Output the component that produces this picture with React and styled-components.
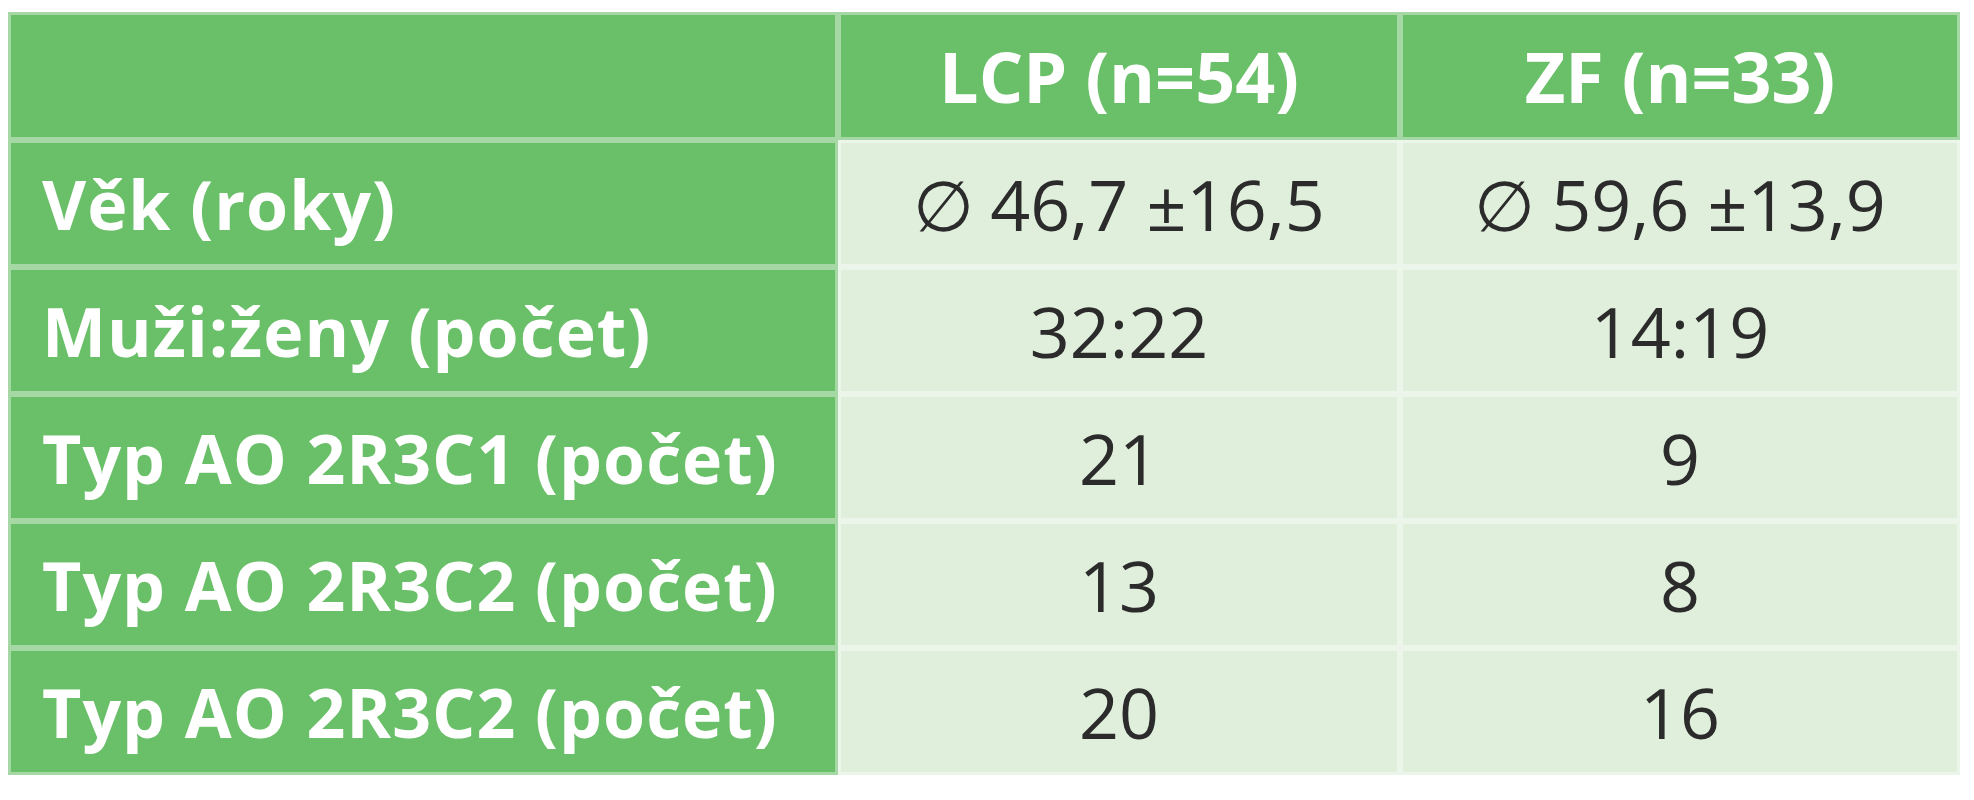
import React from "react";
import styled, { createGlobalStyle } from "styled-components";

// zakladni styly stranky
const GlobalStyle = createGlobalStyle`
  html, body {
    margin: 0;
    padding: 0;
    background: #ffffff;
  }
  body {
    padding: 12px 14px 0 8px;
    font-family: "Open Sans", "Noto Sans", sans-serif;
  }
`;

const Table = styled.div`
  display: grid;
  grid-template-columns: 830px 562px 560px;
  grid-template-rows: 128px repeat(5, 127px);
  width: 1952px;
`;

const Cell = styled.div`
  display: flex;
  align-items: center;
  justify-content: ${(p) => (p.$kind === "label" ? "flex-start" : "center")};
  padding: 0 0 0 ${(p) => (p.$kind === "label" ? "31px" : "0")};
  border: 3px solid rgba(255, 255, 255, 0.4);
  background-color: ${(p) => (p.$kind === "value" ? "#e0efdc" : "#6abf69")};
  color: ${(p) => (p.$kind === "value" ? "#2b2b2b" : "#ffffff")};
  font-size: ${(p) => (p.$kind === "label" ? "68px" : "70px")};
  font-weight: ${(p) => (p.$kind === "value" ? 400 : 700)};
  letter-spacing: ${(p) => (p.$kind === "label" ? "1px" : "0")};
  white-space: nowrap;
  box-sizing: border-box;
`;

const Sign = styled.span`
  font-weight: 300;
  margin-right: 16px;
`;

const rows = [
  { label: "Věk (roky)", lcp: ["46,7", "16,5"], zf: ["59,6", "13,9"] },
  { label: "Muži:ženy (počet)", lcp: "32:22", zf: "14:19" },
  { label: "Typ AO 2R3C1 (počet)", lcp: "21", zf: "9" },
  { label: "Typ AO 2R3C2 (počet)", lcp: "13", zf: "8" },
  { label: "Typ AO 2R3C2 (počet)", lcp: "20", zf: "16" },
];

const Value = ({ v }) =>
  Array.isArray(v) ? (
    <>
      <Sign>∅</Sign>
      {v[0]} ±{v[1]}
    </>
  ) : (
    v
  );

const App = () => {
  return (
    <>
      <GlobalStyle />
      <Table>
        <Cell $kind="head" />
        <Cell $kind="head">LCP (n=54)</Cell>
        <Cell $kind="head">ZF (n=33)</Cell>
        {rows.map((r, i) => (
          <React.Fragment key={i}>
            <Cell $kind="label">{r.label}</Cell>
            <Cell $kind="value">
              <Value v={r.lcp} />
            </Cell>
            <Cell $kind="value">
              <Value v={r.zf} />
            </Cell>
          </React.Fragment>
        ))}
      </Table>
    </>
  );
};

export default App;
